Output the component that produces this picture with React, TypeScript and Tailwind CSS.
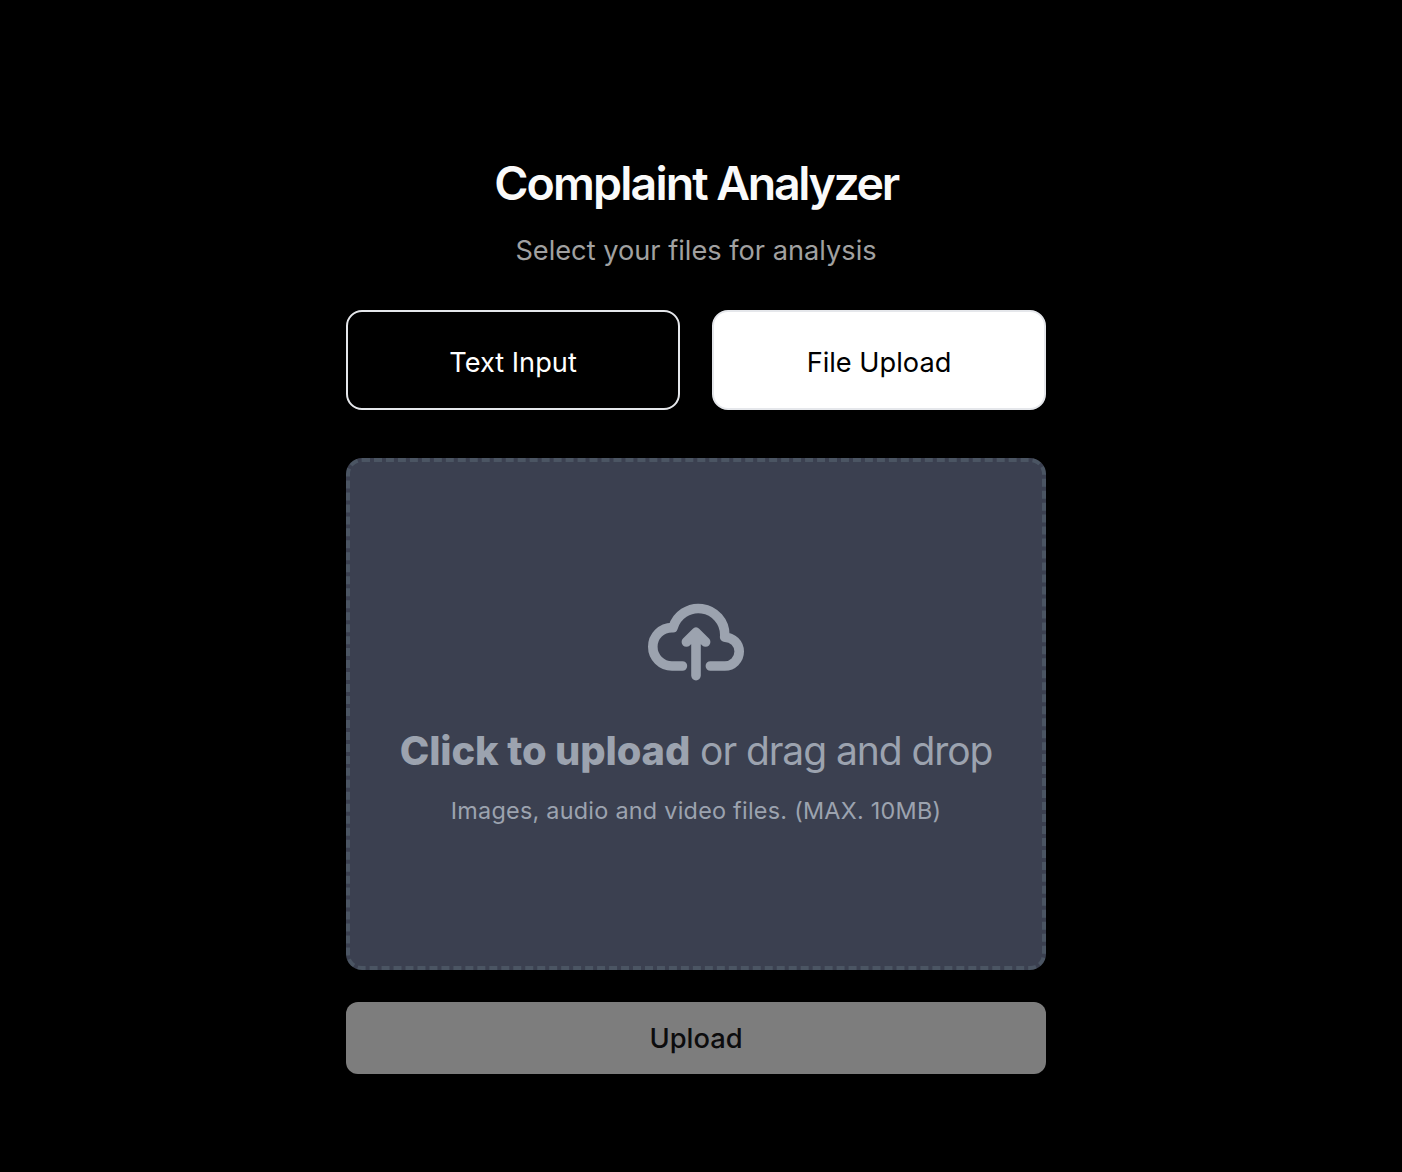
export default function App() {
  return (
    <main className="flex h-[1172px] w-full flex-col items-center bg-black pr-[10px] pt-[155px] font-['Inter',sans-serif]">
      <div className="flex w-[700px] flex-col">
        <h1 className="text-center text-[46.5px] font-semibold leading-[56px] tracking-[-2.35px] text-[#fafafa]"><span className="tracking-[-1.84px]">Complaint</span> Analyzer</h1>
        <p className="mt-[20px] text-center text-[27.2px] leading-[40px] text-[#a1a1a1]">Select your files for analysis</p>
        <div className="mt-[39px] grid grid-cols-2 gap-8">
          <button className="h-[100px] rounded-[16px] border-2 border-gray-200 bg-black pt-1.5 text-[27.2px] text-white">Text Input</button>
          <button className="h-[100px] rounded-[16px] border-2 border-gray-200 bg-white pt-1.5 text-[27.2px] text-black">File Upload</button>
        </div>
        <div className="mt-12 flex h-[512px] flex-col items-center rounded-[16px] border-4 border-dashed border-[#4b5563] bg-[#3b4050] pt-[136px] text-[#9ca3af]">
          <svg className="h-[88px] w-[96px]" viewBox="0 0 20 16" fill="none" stroke="currentColor" strokeWidth="2" strokeLinecap="round" strokeLinejoin="round">
            <path d="M13 13h3a3 3 0 0 0 0-6h-.025A5.56 5.56 0 0 0 16 6.5 5.5 5.5 0 0 0 5.207 5.021C5.137 5.017 5.071 5 5 5a4 4 0 0 0 0 8h2.167M10 15V6m0 0L8 8m2-2 2 2" />
          </svg>
          <p className="mt-[37px] whitespace-nowrap text-[39px] leading-[56px] tracking-[-1.07px]"><span className="text-[39.8px] font-extrabold tracking-[-0.1px]">Click to upload</span> or drag and drop</p>
          <p className="mt-[16px] text-[23.4px] leading-[32px] tracking-[0.25px]">Images, audio and video files. (MAX. 10MB)</p>
        </div>
        <button className="mt-8 h-[72px] rounded-[12px] bg-[#7d7d7d] pt-[3px] text-[27.3px] font-medium text-[#0c0c0d]">Upload</button>
      </div>
    </main>
  );
}
